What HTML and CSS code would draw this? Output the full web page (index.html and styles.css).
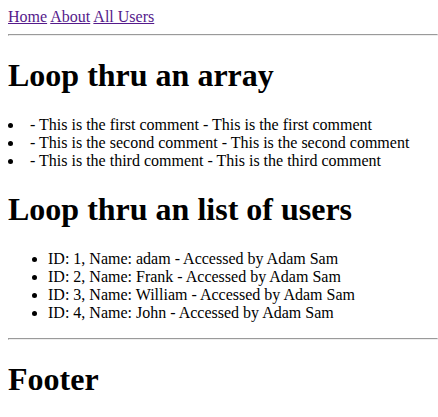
FILE: index.html
```html
<!DOCTYPE html>
<html>
<head>
<meta charset="utf-8">
<link rel="stylesheet" href="styles.css">
</head>
<body>
<nav class="nav"><a class="link" href="#">Home</a> <a class="link" href="#">About</a> <a class="link" href="#">All Users</a></nav>
<hr class="rule">
<h1 class="title">Loop thru an array</h1>
<ul class="comments">
<li> - This is the first comment - This is the first comment</li>
<li> - This is the second comment - This is the second comment</li>
<li> - This is the third comment - This is the third comment</li>
</ul>
<h1 class="title">Loop thru an list of users</h1>
<ul class="users">
<li>ID: 1, Name: adam - Accessed by Adam Sam</li>
<li>ID: 2, Name: Frank - Accessed by Adam Sam</li>
<li>ID: 3, Name: William - Accessed by Adam Sam</li>
<li>ID: 4, Name: John - Accessed by Adam Sam</li>
</ul>
<hr class="rule">
<h1 class="title">Footer</h1>
</body>
</html>
```
FILE: styles.css
```css
html {
  overflow: hidden;
}
body {
  margin: 8px 0 8px 8px;
  font-family: "Liberation Serif", "Times New Roman", serif;
  font-size: 16px;
}
.link {
  color: #551a8b;
}
.comments {
  padding-left: 0;
  list-style-position: inside;
}
```
